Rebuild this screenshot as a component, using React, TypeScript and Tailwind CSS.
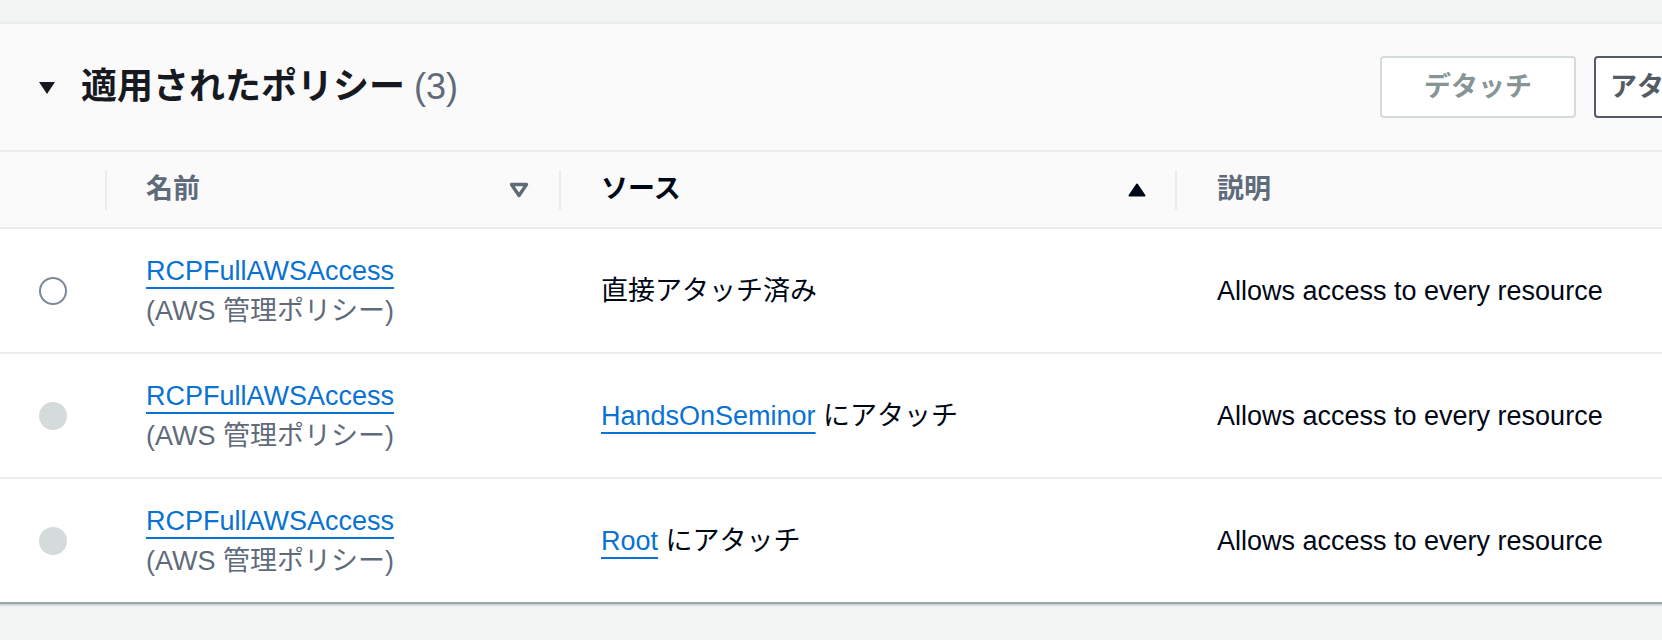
import type { ReactNode } from 'react';

// 適用されたポリシー テーブル

const FONT = "font-['Liberation_Sans','Noto_Sans_CJK_JP',sans-serif]";

interface PolicyRow {
  name: string;
  disabled: boolean;
  source: ReactNode;
  description: string;
}

const Link = ({ children }: { children: ReactNode }) => (
  <a
    href="#"
    className="text-[#0972d3] underline decoration-2 underline-offset-[7px]"
  >
    {children}
  </a>
);

const rows: PolicyRow[] = [
  {
    name: 'RCPFullAWSAccess',
    disabled: false,
    source: <span>直接アタッチ済み</span>,
    description: 'Allows access to every resource',
  },
  {
    name: 'RCPFullAWSAccess',
    disabled: true,
    source: (
      <span>
        <Link>HandsOnSeminor</Link> にアタッチ
      </span>
    ),
    description: 'Allows access to every resource',
  },
  {
    name: 'RCPFullAWSAccess',
    disabled: true,
    source: (
      <span>
        <Link>Root</Link> にアタッチ
      </span>
    ),
    description: 'Allows access to every resource',
  },
];

const SortDownOutline = () => (
  <svg width="20" height="16" viewBox="0 0 20 16" className="shrink-0">
    <polygon
      points="2.5,2.5 17.5,2.5 10,13.5"
      fill="#ffffff"
      stroke="#5f6b7a"
      strokeWidth="3.4"
      strokeLinejoin="round"
    />
  </svg>
);

const SortUpFilled = () => (
  <svg width="20" height="16" viewBox="0 0 20 16" className="shrink-0">
    <polygon
      points="2.5,13.5 17.5,13.5 10,2.5"
      fill="#000716"
      stroke="#000716"
      strokeWidth="2"
      strokeLinejoin="round"
    />
  </svg>
);

const Separator = () => <div className="h-[40px] w-[2px] shrink-0 bg-[#eaeded]" />;

const Radio = ({ disabled }: { disabled: boolean }) =>
  disabled ? (
    <span className="block h-[28px] w-[28px] rounded-full bg-[#d5dbdb]" />
  ) : (
    <span className="block h-[28px] w-[28px] rounded-full border-2 border-[#7d8998] bg-white" />
  );

export default function App() {
  return (
    <div className={`min-h-[640px] w-full overflow-hidden bg-[#f2f3f3] ${FONT}`}>
      <div className="h-[22px]" />
      <div className="w-[1760px] border-t-2 border-b-2 border-[#eaeded] border-b-[#9ba7a9] bg-white shadow-[0_1px_2px_rgba(0,28,36,0.25)]">
        {/* ヘッダー */}
        <div className="flex h-[128px] items-center border-b-2 border-[#eaeded] bg-[#fafafa] pl-[38px] pr-[26px]">
          <svg width="18" height="14" viewBox="0 0 18 14" className="mt-[2px] shrink-0">
            <polygon points="1,1 17,1 9,13" fill="#16191f" />
          </svg>
          <h2 className="ml-[25px] text-[36px] leading-[44px] text-[#16191f]">
            <span className="font-bold">適用されたポリシー</span>
            <span className="ml-[9px] font-normal text-[#5f6b7a]">(3)</span>
          </h2>
          <div className="ml-auto flex items-center gap-[18px]">
            <button className="h-[62px] w-[196px] rounded-[4px] border-2 border-[#d5dbdb] bg-white text-[27px] font-bold text-[#879596]">
              デタッチ
            </button>
            <button className="h-[62px] rounded-[4px] border-2 border-[#545b64] bg-white px-[14px] text-[27px] font-bold text-[#545b64]">
              アタッチ
            </button>
          </div>
        </div>

        {/* 列ヘッダー */}
        <div className="grid h-[77px] grid-cols-[105px_454px_616px_1fr] border-b-2 border-[#eaeded] bg-[#fafafa] text-[27px] font-bold">
          <div />
          <div className="flex items-center">
            <Separator />
            <span className="ml-[39px] text-[#5f6b7a]">名前</span>
            <div className="flex-1" />
            <div className="mr-[30px]">
              <SortDownOutline />
            </div>
          </div>
          <div className="flex items-center">
            <Separator />
            <span className="ml-[40px] text-[#000716]">ソース</span>
            <div className="flex-1" />
            <div className="mr-[28px]">
              <SortUpFilled />
            </div>
          </div>
          <div className="flex items-center">
            <Separator />
            <span className="ml-[40px] text-[#5f6b7a]">説明</span>
          </div>
        </div>

        {/* 行 */}
        {rows.map((row, i) => (
          <div
            key={i}
            className={`grid h-[123px] grid-cols-[105px_454px_616px_1fr] items-center bg-white text-[27px] text-[#000716] ${
              i < rows.length - 1 ? 'border-b-2 border-[#eaeded] box-content' : ''
            }`}
          >
            <div className="flex justify-center">
              <Radio disabled={row.disabled} />
            </div>
            <div className="pl-[41px] leading-[40px]">
              <div>
                <Link>{row.name}</Link>
              </div>
              <div className="text-[#5f6b7a]">(AWS 管理ポリシー)</div>
            </div>
            <div className="pl-[42px] leading-[40px]">{row.source}</div>
            <div className="pl-[42px] leading-[40px]">{row.description}</div>
          </div>
        ))}
      </div>
    </div>
  );
}
